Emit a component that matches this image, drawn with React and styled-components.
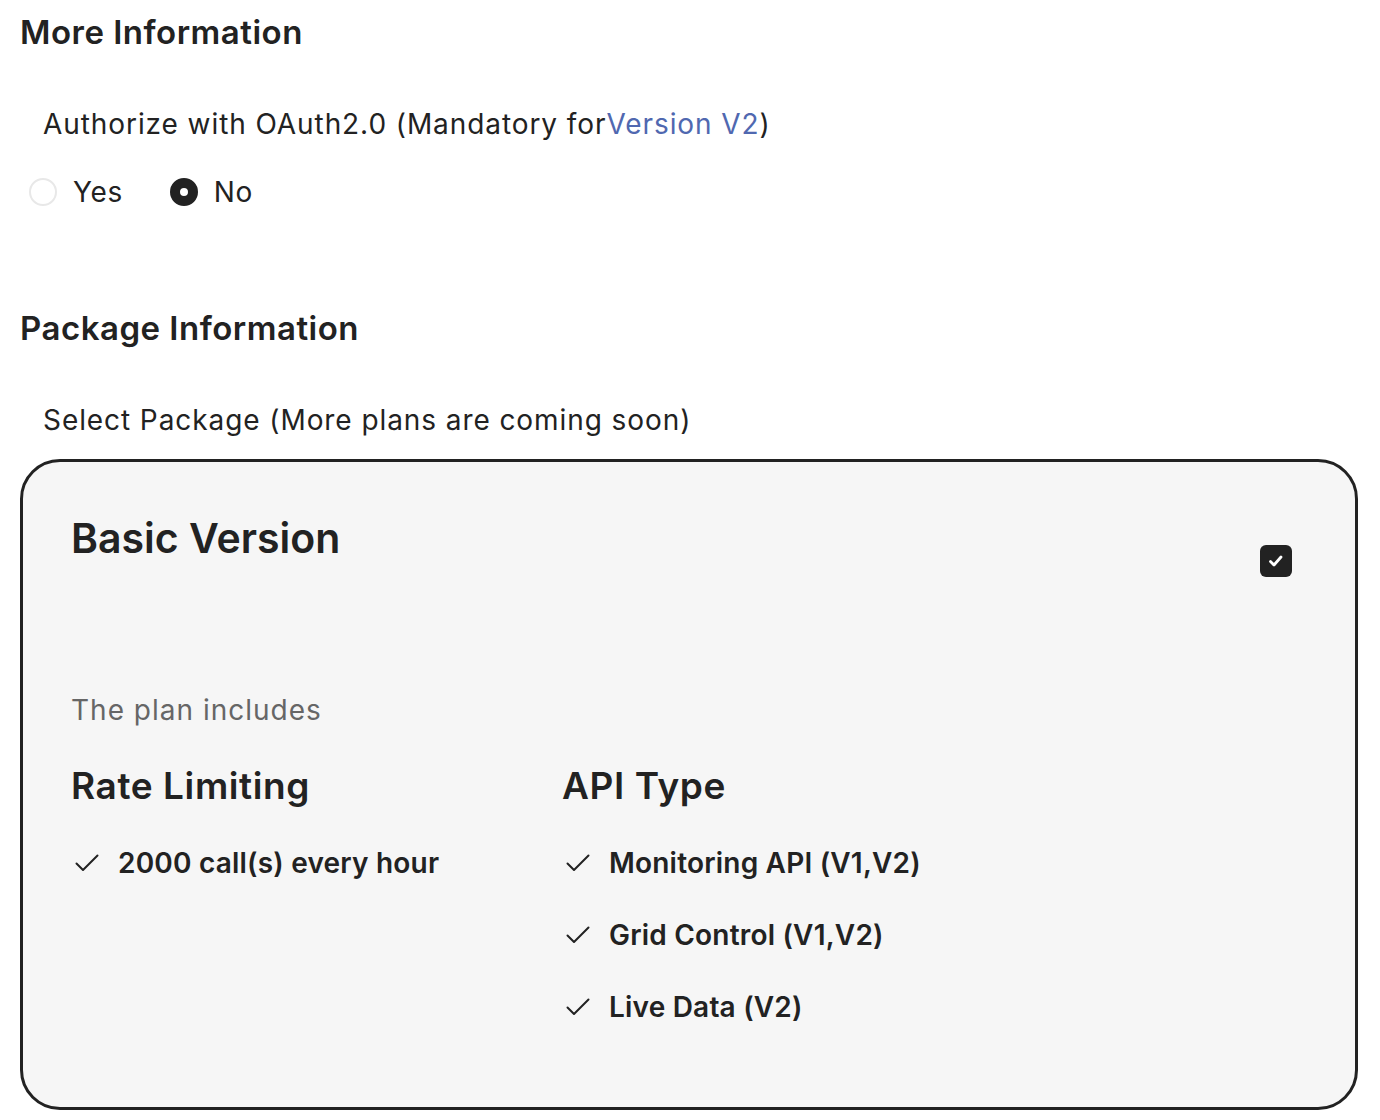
import React from 'react'
import styled, {createGlobalStyle} from 'styled-components'

const Global = createGlobalStyle`
  body {
    margin: 0;
    background: #fff;
    font-family: Inter, "Open Sans", sans-serif;
    color: #222;
  }
`

const apiTypes = ['Monitoring API (V1,V2)', 'Grid Control (V1,V2)', 'Live Data (V2)']

const Check = () => (
  <svg width="24" height="18" viewBox="0 0 24 18" fill="none">
    <path d="M1.5 9.5 L8 16 L22.5 1.5" stroke="#222" strokeWidth="2" strokeLinecap="round" strokeLinejoin="round" />
  </svg>
)

const App = () => {
  return (
    <Page>
      <Global />
      <Title>More Information</Title>
      <Label>Authorize with OAuth2.0 (Mandatory for<Link>Version V2</Link>)</Label>
      <RadioRow>
        <RadioOption>
          <Radio />
          Yes
        </RadioOption>
        <RadioOption>
          <Radio checked />
          No
        </RadioOption>
      </RadioRow>

      <Title second>Package Information</Title>
      <Label>Select Package (More plans are coming soon)</Label>

      <Card>
        <CardTop>
          <PlanName>Basic Version</PlanName>
          <CheckBox>
            <svg width="18" height="18" viewBox="0 0 18 18" fill="none">
              <path d="M3.5 9.5 L7 13 L14 5" stroke="#fff" strokeWidth="2.8" strokeLinecap="round" strokeLinejoin="round" />
            </svg>
          </CheckBox>
        </CardTop>
        <Includes>The plan includes</Includes>
        <Columns>
          <Column>
            <ColumnTitle>Rate Limiting</ColumnTitle>
            <Item><Check />2000 call(s) every hour</Item>
          </Column>
          <Column>
            <ColumnTitle>API Type</ColumnTitle>
            {apiTypes.map(t => (
              <Item key={t}><Check />{t}</Item>
            ))}
          </Column>
        </Columns>
      </Card>
    </Page>
  )
}

const Page = styled.div`
  padding: 12px 22px 10px 20px;
  width: 1338px;
`

const Title = styled.h2`
  margin: ${p => p.second ? '96px' : '0'} 0 0;
  font-size: 33px;
  font-weight: 600;
  line-height: 40px;
  letter-spacing: 0.5px;
`

const Label = styled.div`
  margin: 52px 0 0 23px;
  font-size: 28px;
  line-height: 40px;
  letter-spacing: 0.92px;
`

const Link = styled.span`
  color: #5068b0;
`

const RadioRow = styled.div`
  display: flex;
  gap: 47px;
  margin: 28px 0 0 9px;
`

const RadioOption = styled.label`
  display: flex;
  align-items: center;
  gap: 16px;
  font-size: 28px;
  line-height: 40px;
  letter-spacing: 0.6px;
`

const Radio = styled.span`
  box-sizing: border-box;
  width: 28px;
  height: 28px;
  border-radius: 50%;
  border: ${p => p.checked ? '10px solid #222' : '2px solid #e8e8e8'};
  background: #fff;
`

const Card = styled.div`
  margin-top: 19px;
  border: 3px solid #222;
  border-radius: 40px;
  background: #f6f6f6;
  padding: 51px 63px 80px 48px;
`

const CardTop = styled.div`
  display: flex;
  justify-content: space-between;
  align-items: flex-start;
`

const PlanName = styled.h3`
  margin: 0;
  font-size: 41px;
  font-weight: 600;
  line-height: 50px;
`

const CheckBox = styled.span`
  margin-top: 32px;
  width: 32px;
  height: 32px;
  border-radius: 6px;
  background: #222;
  display: flex;
  align-items: center;
  justify-content: center;
`

const Includes = styled.div`
  margin-top: 113px;
  font-size: 28px;
  line-height: 40px;
  color: #666;
  letter-spacing: 1px;
`

const Columns = styled.div`
  display: grid;
  grid-template-columns: 491px 1fr;
  margin-top: 33px;
`

const Column = styled.div`
  display: flex;
  flex-direction: column;
  gap: 32px;
`

const ColumnTitle = styled.h4`
  margin: 0 0 2px;
  font-size: 37px;
  font-weight: 600;
  line-height: 46px;
  letter-spacing: 0.6px;
`

const Item = styled.div`
  display: flex;
  align-items: center;
  gap: 19px;
  padding-left: 4px;
  font-size: 28px;
  font-weight: 600;
  line-height: 40px;
  letter-spacing: 0.2px;
`

export default App
